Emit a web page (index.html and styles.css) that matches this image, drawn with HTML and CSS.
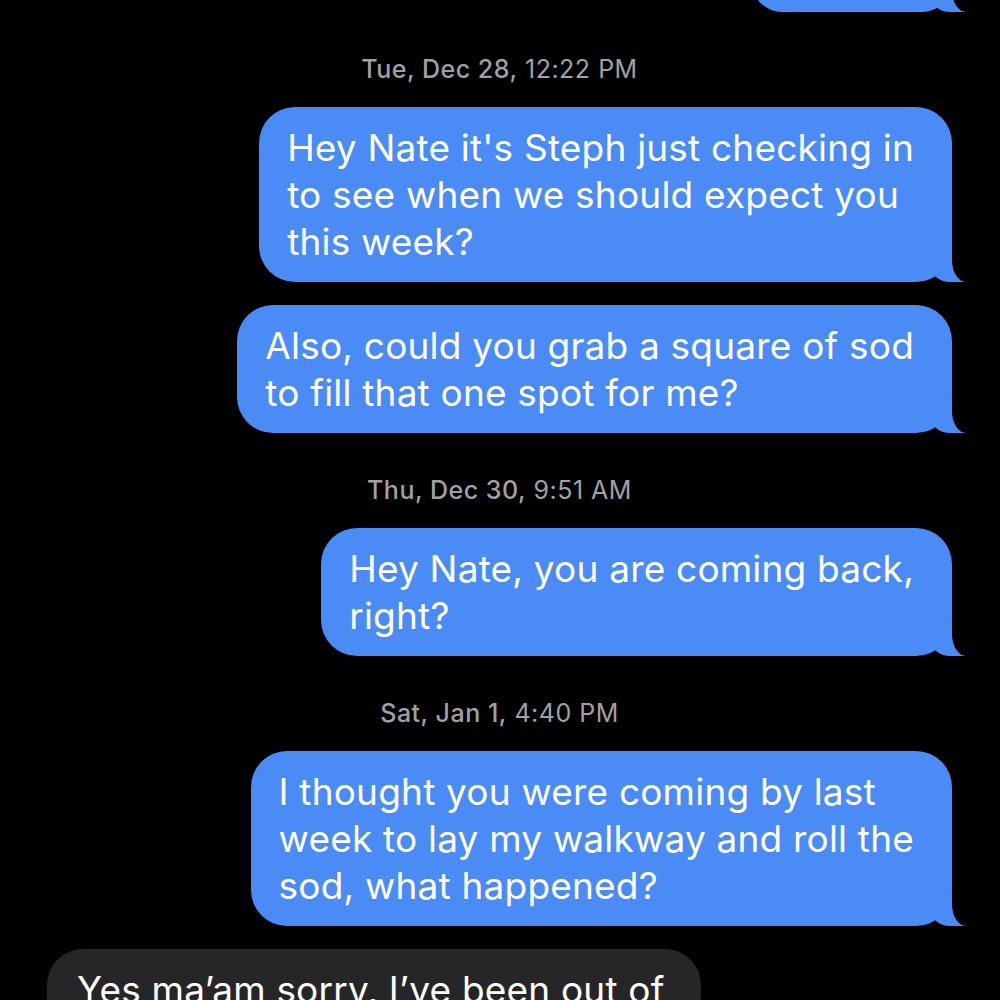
FILE: index.html
```html
<!DOCTYPE html>
<html lang="en">

<head>
    <meta charset="UTF-8">
    <meta name="viewport" content="width=device-width, initial-scale=1.0">
    <title>Messages</title>
    <link rel="stylesheet" href="styles.css">
</head>

<body>
    <div class="thread">
        <!-- bubble cut off at the top of the screen -->
        <div class="bubble out cut"></div>

        <p class="stamp"><b>Tue, Dec 28,</b> 12:22 PM</p>
        <div class="bubble out">Hey Nate it's Steph just checking in<br>to see when we should expect you<br>this week?</div>
        <div class="bubble out">Also, could you grab a square of sod<br>to fill that one spot for me?</div>

        <p class="stamp"><b>Thu, Dec 30,</b> 9:51 AM</p>
        <div class="bubble out">Hey Nate, you are coming back,<br>right?</div>

        <p class="stamp"><b>Sat, Jan 1,</b> 4:40 PM</p>
        <div class="bubble out">I thought you were coming by last<br>week to lay my walkway and roll the<br>sod, what happened?</div>

        <div class="bubble in">Yes ma’am sorry, I’ve been out of</div>
    </div>
</body>

</html>
```

FILE: styles.css
```css
* {
    margin: 0;
    padding: 0;
    box-sizing: border-box;
}

body {
    background-color: #000;
    font-family: Inter, "Noto Sans", Arial, sans-serif;
    color: #fff;
    overflow: hidden;
    height: 1000px;
}

.thread {
    display: flex;
    flex-direction: column;
    padding: 0 48px 0 47px;
}

.stamp {
    align-self: center;
    margin: 43px 0 24px;
    font-size: 25px;
    line-height: 28px;
    color: #a0a0a5;
    font-weight: 400;
    letter-spacing: 0.5px;
}

.stamp b {
    font-weight: 500;
}

.bubble {
    position: relative;
    font-size: 37px;
    line-height: 47px;
    letter-spacing: 0.2px;
    white-space: nowrap;
    border-radius: 36px;
    padding: 17px 38px 17px 28px;
}

.bubble + .bubble {
    margin-top: 23px;
}

.out {
    align-self: flex-end;
    background: #4b8bf5;
}

.in {
    align-self: flex-start;
    background: #262628;
    padding: 17px 36px 17px 30px;
    margin-top: 22px;
}

.cut {
    width: 200px;
    height: 60px;
    margin-top: -48px;
}

/* tail */
.out::before {
    content: "";
    position: absolute;
    bottom: 0;
    right: -14px;
    width: 34px;
    height: 34px;
    background: #4b8bf5;
    border-bottom-left-radius: 18px 14px;
}

.out::after {
    content: "";
    position: absolute;
    bottom: 0;
    right: -24px;
    width: 24px;
    height: 36px;
    background: #000;
    border-bottom-left-radius: 14px 22px;
}

.in::before {
    content: "";
    position: absolute;
    bottom: 0;
    left: -14px;
    width: 34px;
    height: 34px;
    background: #262628;
    border-bottom-right-radius: 18px 14px;
}

.in::after {
    content: "";
    position: absolute;
    bottom: 0;
    left: -24px;
    width: 24px;
    height: 36px;
    background: #000;
    border-bottom-right-radius: 14px 22px;
}
```
